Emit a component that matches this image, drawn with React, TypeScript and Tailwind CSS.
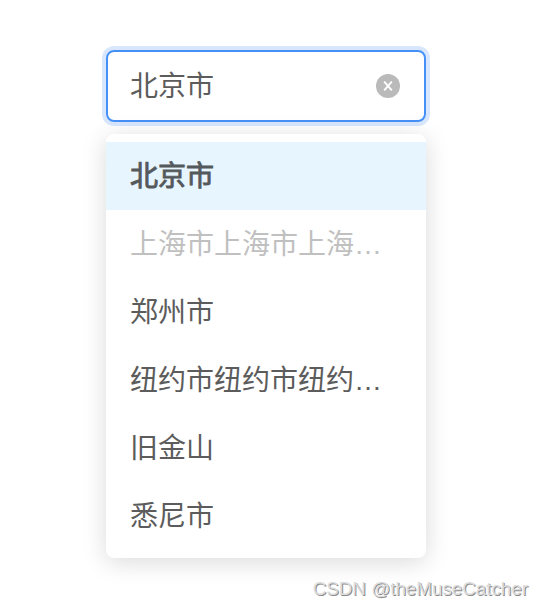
import React from 'react';
import { clsx } from 'clsx';

interface City {
    label: string;
    value: number;
    disabled?: boolean;
}

const cities: City[] = [
    { label: '北京市', value: 1 },
    { label: '上海市上海市上海…', value: 2, disabled: true },
    { label: '郑州市', value: 3 },
    { label: '纽约市纽约市纽约…', value: 4 },
    { label: '旧金山', value: 5 },
    { label: '悉尼市', value: 6 },
];

const ClearIcon = () => (
    <svg className="w-6 h-6 shrink-0" viewBox="0 0 24 24" fill="none">
        <circle cx="12" cy="12" r="12" fill="#bababa" />
        <path d="M8.2 7.6l7.6 8.8M15.8 7.6l-7.6 8.8" stroke="#fff" strokeWidth="1.9" />
    </svg>
);

const Option = ({ city, selected }: { city: City; selected: boolean }) => (
    <li
        className={clsx(
            'h-[68px] px-6 pt-px leading-[68px] whitespace-nowrap',
            // a light stroke gives a semibold look, the CJK face only has regular and bold
            selected && 'bg-[#e7f5fe] text-[#54595c] [-webkit-text-stroke:0.9px_#54595c]',
            city.disabled && 'text-[#c0c0c0]',
        )}
    >
        {city.label}
    </li>
);

export default function App() {
    const selected = cities[0];

    return (
        <div className="h-[606px] bg-white overflow-hidden flex flex-col pt-[50px] text-[28px] text-[#5c5c5c] font-['Liberation_Sans','Noto_Sans_CJK_SC',sans-serif]">
            <div className="w-80 ml-[106px]">
                <div className="h-[72px] pl-[22px] pr-6 flex items-center justify-between rounded-lg border-2 border-[#4590f7] shadow-[0_0_0_4px_#d8e7fd]">
                    <span className="pt-0.5">{selected.label}</span>
                    <ClearIcon />
                </div>
                <ul className="mt-3 py-2 rounded-lg bg-white shadow-[0_4px_24px_rgba(0,0,0,0.15)]">
                    {cities.map((city) => (
                        <Option key={city.value} city={city} selected={city.value === selected.value} />
                    ))}
                </ul>
            </div>
            <div className="mt-auto pr-4 pb-[3px] text-right text-[18.8px] text-[#dcdcdc] [text-shadow:1px_1px_0_#8c8c8c]">
                CSDN @theMuseCatcher
            </div>
        </div>
    );
}
